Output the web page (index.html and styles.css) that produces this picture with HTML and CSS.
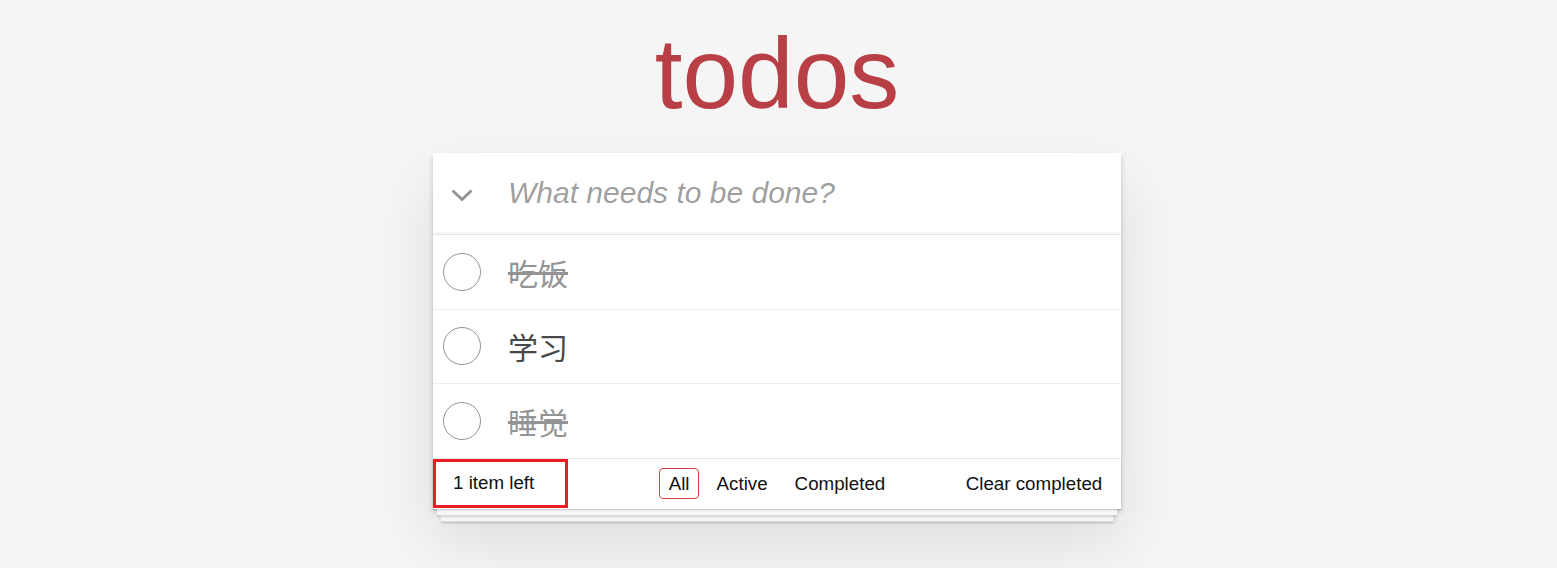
FILE: index.html
```html
<!DOCTYPE html>
<html lang="zh-CN">
<head>
<meta charset="utf-8">
<title>todos</title>
<link rel="stylesheet" href="styles.css">
</head>
<body>
<section class="todoapp">
  <h1 class="title">todos</h1>
  <div class="card">
    <header class="new-row">
      <label class="toggle-all" aria-label="Mark all as complete">
        <svg class="chevron" width="22" height="13" viewBox="0 0 22 13"><polyline points="1.5,1.5 11,10.5 20.5,1.5" fill="none" stroke="#949494" stroke-width="3"/></svg>
      </label>
      <input class="new-todo" placeholder="What needs to be done?">
    </header>
    <ul class="todo-list">
      <li class="item completed"><input class="toggle" type="checkbox" checked><label class="item-label">吃饭</label></li>
      <li class="item"><input class="toggle" type="checkbox"><label class="item-label">学习</label></li>
      <li class="item completed"><input class="toggle" type="checkbox" checked><label class="item-label">睡觉</label></li>
    </ul>
    <footer class="footer">
      <span class="todo-count"><strong class="count-num">1</strong>&nbsp;item left</span>
      <ul class="filters">
        <li><a class="filter selected" href="#/">All</a></li>
        <li><a class="filter" href="#/active">Active</a></li>
        <li><a class="filter" href="#/completed">Completed</a></li>
      </ul>
      <button class="clear-completed">Clear completed</button>
    </footer>
  </div>
</section>
</body>
</html>
```

FILE: styles.css
```css
html, body {
  margin: 0;
  padding: 0;
}

body {
  font-family: "Liberation Sans", Arial, "Noto Sans CJK SC", sans-serif;
  font-size: 17.5px;
  line-height: 1.4em;
  background: #f5f5f5;
  color: #111111;
  font-weight: 400;
  padding-right: 3px;
  min-height: 100vh;
}

.todoapp {
  width: 688px;
  margin: 0 auto 50px auto;
  display: flex;
  flex-direction: column;
}

.title {
  margin: 0;
  padding-top: 16px;
  height: 115px;
  line-height: 115px;
  margin-bottom: 22px;
  font-size: 100px;
  font-weight: 400;
  text-align: center;
  color: #b83f45;
}

.card {
  background: #fff;
  box-shadow: 0 2.5px 5px 0 rgba(0, 0, 0, 0.2), 0 31px 62px 0 rgba(0, 0, 0, 0.1);
}

.new-row {
  display: flex;
  align-items: center;
  height: 81px;
  box-shadow: inset 0 -2.5px 1.25px rgba(0, 0, 0, 0.03);
}

.toggle-all {
  width: 58px;
  height: 100%;
  flex: none;
  display: flex;
  align-items: center;
  justify-content: center;
}

.chevron {
  display: block;
  margin-top: 3px;
}

.new-todo {
  flex: 1;
  min-width: 0;
  height: 100%;
  box-sizing: border-box;
  margin: 0;
  padding: 18px 20px 20px 17px;
  border: none;
  outline: none;
  background: transparent;
  font-family: inherit;
  font-size: 30px;
  line-height: 42px;
  color: #111;
}

.new-todo::placeholder {
  font-style: italic;
  font-weight: 400;
  color: rgba(0, 0, 0, 0.4);
}

.todo-list {
  margin: 0;
  padding: 0;
  list-style: none;
  border-top: 1px solid #e6e6e6;
}

.item {
  display: flex;
  align-items: center;
  font-size: 30px;
  border-bottom: 1px solid #ededed;
}

.item:last-child {
  border-bottom: none;
}

.toggle {
  appearance: none;
  -webkit-appearance: none;
  flex: none;
  width: 38px;
  height: 38px;
  margin: 0 0 0 10px;
  box-sizing: border-box;
  border: 1px solid #949494;
  border-radius: 50%;
  background: #fff;
}

.item-label {
  flex: 1;
  display: block;
  padding: 18.75px 18.75px 18.75px 27px;
  line-height: 36px;
  font-family: "Noto Sans CJK SC", "Liberation Sans", sans-serif;
  font-weight: 400;
  color: #484848;
}

.completed .item-label {
  color: #949494;
  text-decoration: line-through;
}

.footer {
  display: grid;
  grid-template-columns: 1fr auto 1fr;
  align-items: center;
  height: 50px;
  border-top: 1px solid #e6e6e6;
  font-size: 18.75px;
  box-shadow: 0 1.25px 1.25px rgba(0, 0, 0, 0.2),
    0 10px 0 -3.75px #f6f6f6,
    0 11.25px 1.25px -3.75px rgba(0, 0, 0, 0.2),
    0 20px 0 -7.5px #f6f6f6,
    0 21.25px 2.5px -7.5px rgba(0, 0, 0, 0.2);
}

.todo-count {
  align-self: start;
  justify-self: start;
  display: flex;
  align-items: center;
  box-sizing: border-box;
  width: 135px;
  height: 49px;
  padding-left: 17px;
  border: 3px solid #ec1c24;
  color: #111;
}

.count-num {
  font-weight: 400;
}

.filters {
  margin: 0;
  padding: 0;
  list-style: none;
  display: flex;
}

.filter {
  display: inline-flex;
  margin: 3.75px;
  padding: 3.75px 8.75px;
  line-height: 21px;
  color: inherit;
  text-decoration: none;
  border: 1px solid transparent;
  border-radius: 4px;
}

.filter.selected {
  border-color: #ce4646;
}

.clear-completed {
  justify-self: end;
  margin: 0;
  padding: 0 18.75px 0 0;
  border: none;
  background: none;
  font: inherit;
  line-height: 23.75px;
  color: #111;
  cursor: pointer;
}
```
